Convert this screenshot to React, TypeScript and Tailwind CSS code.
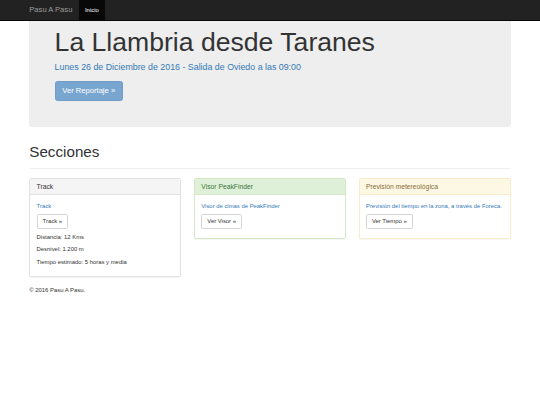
import React from "react";

type Panel = {
  title: string;
  head: string;
  border: string;
  body: React.ReactNode;
};

function Btn({ children }: { children: React.ReactNode }) {
  return (
    <span className="inline-block rounded-[1.7px] border border-[#d4d4d4] bg-white px-[5px] py-[2px] text-[5.9px] leading-[8.4px] text-[#333]">
      {children}
    </span>
  );
}

const panels: Panel[] = [
  {
    title: "Track",
    head: "bg-[#f5f5f5] text-[#333] border-[#e2e2e2]",
    border: "border-[#e2e2e2]",
    body: (
      <>
        <p className="mb-[4.2px] text-[#337ab7]">Track</p>
        <div className="mb-[4.2px] flex h-[14.4px]">
          <Btn>Track »</Btn>
        </div>
        <p className="mb-[4.2px]">Distancia: 12 Kms</p>
        <p className="mb-[4.2px]">Desnivel: 1.200 m</p>
        <p className="mb-[4.2px]">Tiempo estimado: 5 horas y media</p>
      </>
    ),
  },
  {
    title: "Visor PeakFinder",
    head: "bg-[#dff0d8] text-[#3c763d] border-[#d6e9c6]",
    border: "border-[#d6e9c6]",
    body: (
      <>
        <p className="mb-[4.2px] text-[#337ab7]">Visor de cimas de PeakFinder</p>
        <div className="mb-[4.2px] flex h-[14.4px]">
          <Btn>Ver Visor »</Btn>
        </div>
      </>
    ),
  },
  {
    title: "Previsión metereológica",
    head: "bg-[#fcf8e3] text-[#8a6d3b] border-[#faebcc]",
    border: "border-[#faebcc]",
    body: (
      <>
        <p className="mb-[4.2px] text-[#337ab7]">
          Previsión del tiempo en la zona, a través de Foreca.
        </p>
        <div className="mb-[4.2px] flex h-[14.4px]">
          <Btn>Ver Tiempo »</Btn>
        </div>
      </>
    ),
  },
];

export default function App() {
  return (
    <div className="min-h-[405px] bg-white font-['Liberation_Sans',Arial,sans-serif] text-[#333]">
      {/* Navbar */}
      <nav className="h-[21px] border-b border-[#080808] bg-[#222]">
        <div className="mx-auto flex h-full w-[494px] px-[6.3px]">
          <a className="pr-[6.3px] pt-[6.3px] text-[7.6px] leading-[8.4px] text-[#9d9d9d]">
            Pasu A Pasu
          </a>
          <a className="h-[21px] bg-[#080808] px-[6.3px] pt-[6.3px] text-[5.9px] leading-[8.4px] text-white">
            Inicio
          </a>
        </div>
      </nav>

      <div className="mx-auto w-[494px] px-[6.3px]">
        {/* Jumbotron */}
        <div className="mb-[12.66px] rounded-b-[2.5px] bg-[#eee] px-[25.3px] pb-[26px] pt-[7px]">
          <h1 className="mb-[4.2px] text-[26.6px] leading-[29.3px] text-[#333]">
            La Llambria desde Taranes
          </h1>
          <p className="mb-[6.3px] text-[8.86px] leading-[12.66px] text-[#337ab7]">
            Lunes 26 de Diciembre de 2016 - Salida de Oviedo a las 09:00
          </p>
          <div className="flex pt-[0.7px]">
            <span className="inline-block rounded-[2.5px] border border-[#6f9dca] bg-[#79a6d1] px-[6.75px] py-[4.2px] text-[7.6px] leading-[9px] text-white">
              Ver Reportaje »
            </span>
          </div>
        </div>

        {/* Secciones */}
        <div className="mb-[8.4px] border-b border-[#f0f0f0] pb-[3.8px] pt-[4.4px]">
          <h1 className="mb-[4.2px] text-[15.2px] leading-[16.7px] text-[#333]">
            Secciones
          </h1>
        </div>

        <div className="grid grid-cols-3 items-start gap-[12.66px]">
          {panels.map((p) => (
            <div
              key={p.title}
              className={`mb-[8.4px] overflow-hidden rounded-[1.7px] border bg-white shadow-[0_1px_1px_rgba(0,0,0,0.04)] ${p.border}`}
            >
              <div className={`border-b px-[6.3px] py-[4.2px] text-[6.75px] leading-[7.4px] ${p.head}`}>
                {p.title}
              </div>
              <div className="px-[6.3px] pb-[5.5px] pt-[6.3px] text-[5.9px] leading-[8.4px]">
                {p.body}
              </div>
            </div>
          ))}
        </div>

        <footer className="text-[5.9px] leading-[8.4px] text-[#333]">
          <p>© 2016 Pasu A Pasu.</p>
        </footer>
      </div>
    </div>
  );
}
